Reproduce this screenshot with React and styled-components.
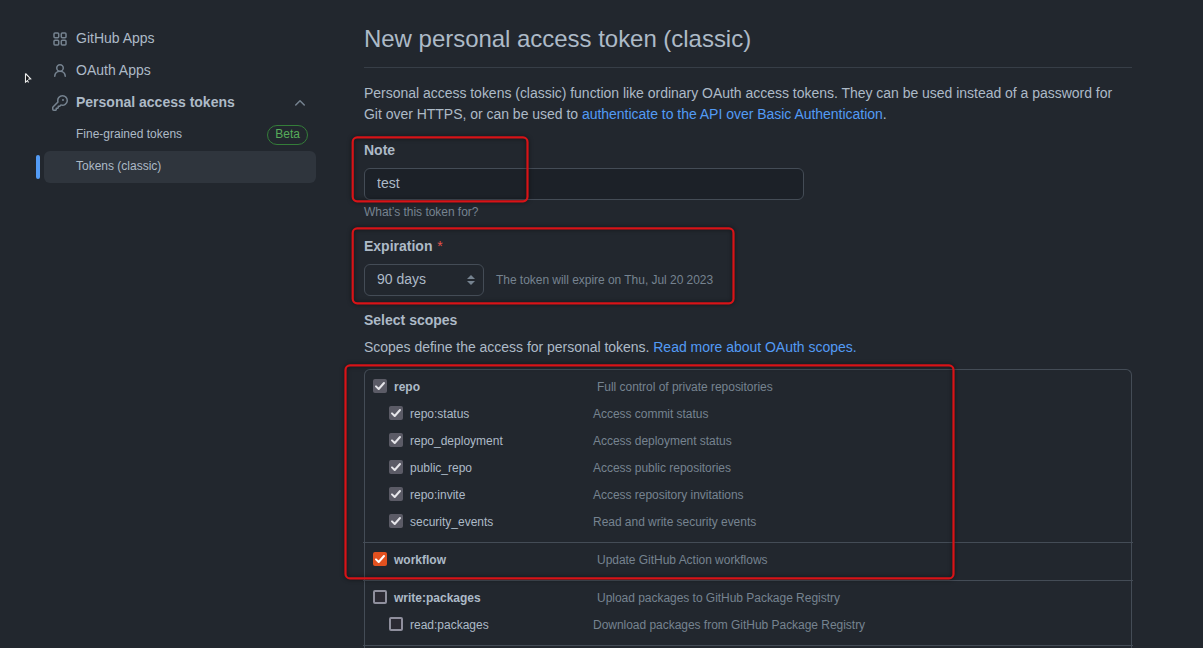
import React from "react";
import styled, { createGlobalStyle, css } from "styled-components";

const Global = createGlobalStyle`
  * { box-sizing: border-box; }
  html, body { margin: 0; height: 100%; overflow: hidden; background: #22272e; }
  body { font: 14px/21px "Liberation Sans", Arial, sans-serif; color: #adbac7; }
`;

const Page = styled.div`
  position: relative;
  display: flex;
  align-items: flex-start;
  gap: 48px;
  width: 1203px;
  height: 648px;
  padding-left: 44px;
  overflow: hidden;
  background: #22272e;
`;

const Sidebar = styled.nav`
  display: flex;
  flex-direction: column;
  width: 272px;
  padding-top: 22px;
`;

const NavItem = styled.a`
  position: relative;
  display: flex;
  align-items: center;
  gap: 8px;
  height: 32px;
  padding: 0 8px;
  font-weight: ${(p) => (p.$bold ? 700 : 400)};
`;

const SubItem = styled(NavItem)`
  height: ${(p) => (p.$active ? "32px" : "33px")};
  padding-left: 32px;
  padding-bottom: 2px;
  font-size: 12px;
  line-height: 18px;
  border-radius: 6px;
  ${(p) =>
    p.$active &&
    css`
      background: #2f353d;
      &::before {
        content: "";
        position: absolute;
        left: -8px;
        top: 4px;
        width: 4px;
        height: 24px;
        border-radius: 6px;
        background: #539bf5;
      }
    `}
`;

const NavLabel = styled.span`
  flex: 1;
`;

const Icon = styled.svg`
  flex: none;
  width: 16px;
  height: 16px;
  margin-top: 2px;
  fill: #768390;
`;

const BetaLabel = styled.span`
  height: 20px;
  margin-top: 2px;
  padding: 0 7px;
  border: 1px solid #347d39;
  border-radius: 10px;
  color: #57ab5a;
  line-height: 17px;
`;

const Main = styled.main`
  display: flex;
  flex-direction: column;
  width: 768px;
  padding-top: 20px;
`;

const Title = styled.h1`
  height: 48px;
  margin: 0 0 15px;
  border-bottom: 1px solid #373e47;
  font-size: 24px;
  line-height: 37px;
  font-weight: 400;
  letter-spacing: -0.03px;
`;

const Text = styled.p`
  margin: 0;
  letter-spacing: -0.022px;
`;

const ScopesIntro = styled(Text)`
  margin-top: 6px;
`;

const Link = styled.a`
  color: #539bf5;
`;

const FieldLabel = styled.label`
  margin-top: ${(p) => p.$top}px;
  font-weight: 700;
`;

const Required = styled.span`
  margin-left: 1px;
  color: #e5534b;
  font-weight: 400;
`;

const NoteInput = styled.input`
  width: 440px;
  height: 32px;
  margin: 7px 0 3px;
  padding: 3px 12px 5px;
  border: 1px solid #444c56;
  border-radius: 6px;
  outline: 0;
  background: #1c2128;
  color: #adbac7;
  font: inherit;
`;

const Hint = styled.span`
  color: #768390;
  font-size: 12px;
  line-height: 18px;
  letter-spacing: -0.035px;
`;

const ExpirationRow = styled.div`
  display: flex;
  align-items: center;
  gap: 12px;
  margin-top: 7px;
`;

const SelectBox = styled.div`
  display: flex;
  align-items: center;
  justify-content: space-between;
  width: 120px;
  height: 32px;
  padding: 0 8px 2px 12px;
  border: 1px solid #444c56;
  border-radius: 6px;
`;

const SelectArrows = styled.svg`
  width: 8px;
  height: 10px;
  margin-top: 2px;
  fill: #768390;
`;

const ScopeList = styled.div`
  height: 290px;
  margin-top: 11px;
  border: 1px solid #444c56;
  border-bottom: 0;
  border-radius: 6px 6px 0 0;
`;

const ScopeGroup = styled.div`
  margin: 0 -2px;
  padding: 3px 10px 7px;
  border-bottom: 1px solid #444c56;
`;

const ScopeRow = styled.div`
  display: flex;
  align-items: center;
  height: 27px;
  padding-left: ${(p) => (p.$child ? 16 : 0)}px;
  font-size: 12px;
  line-height: 18px;
`;

const Check = styled.span`
  flex: none;
  display: flex;
  width: 14px;
  height: 14px;
  margin: 0 7px 1px 0;
  border-radius: 2px;
  border: ${(p) => (p.$tone === "empty" ? "2px solid #8f8f9d" : "0")};
  background: ${(p) => ({ gray: "#5b5b66", orange: "#e2511f", empty: "#2b2a33" })[p.$tone]};
`;

const ScopeName = styled.span`
  width: ${(p) => (p.$child ? 183 : 203)}px;
  font-weight: ${(p) => (p.$child ? 400 : 700)};
`;

const ScopeInfo = styled.span`
  color: #768390;
  letter-spacing: -0.03px;
`;

const Highlight = styled.svg`
  position: absolute;
  left: 0;
  top: 0;
  width: 1203px;
  height: 648px;
  fill: none;
  pointer-events: none;
  filter: drop-shadow(0 0 2px rgba(0, 0, 0, 0.6));
`;

const Pointer = styled.svg`
  position: absolute;
  left: 24px;
  top: 72px;
  width: 9px;
  height: 12px;
`;

const ICONS = {
  apps: "M1.5 3.25c0-.966.784-1.75 1.75-1.75h2.5c.966 0 1.75.784 1.75 1.75v2.5A1.75 1.75 0 0 1 5.75 7.5h-2.5A1.75 1.75 0 0 1 1.5 5.75Zm7 0c0-.966.784-1.75 1.75-1.75h2.5c.966 0 1.75.784 1.75 1.75v2.5a1.75 1.75 0 0 1-1.75 1.75h-2.5A1.75 1.75 0 0 1 8.5 5.75Zm-7 7c0-.966.784-1.75 1.75-1.75h2.5c.966 0 1.75.784 1.75 1.75v2.5a1.75 1.75 0 0 1-1.75 1.75h-2.5a1.75 1.75 0 0 1-1.75-1.75Zm7 0c0-.966.784-1.75 1.75-1.75h2.5c.966 0 1.75.784 1.75 1.75v2.5a1.75 1.75 0 0 1-1.75 1.75h-2.5a1.75 1.75 0 0 1-1.75-1.75ZM3 3v3h3V3Zm7 0v3h3V3ZM3 10v3h3v-3Zm7 0v3h3v-3Z",
  person: "M10.561 8.073a6.005 6.005 0 0 1 3.432 5.142.75.75 0 1 1-1.498.07 4.5 4.5 0 0 0-8.99 0 .75.75 0 0 1-1.498-.07 6.004 6.004 0 0 1 3.431-5.142 3.999 3.999 0 1 1 5.123 0ZM10.5 5a2.5 2.5 0 1 0-5 0 2.5 2.5 0 0 0 5 0Z",
  key: "M10.5 0a5.499 5.499 0 1 1-1.288 10.848l-.932.932a.749.749 0 0 1-.53.22H7v.75a.749.749 0 0 1-.22.53l-.5.5a.749.749 0 0 1-.53.22H5v.75a.749.749 0 0 1-.22.53l-.5.5a.749.749 0 0 1-.53.22h-2A1.75 1.75 0 0 1 0 14.25v-2c0-.199.079-.389.22-.53l4.932-4.932A5.5 5.5 0 0 1 10.5 0Zm-4 5.5c-.001.431.069.86.205 1.269a.75.75 0 0 1-.181.768L1.5 12.56v1.69c0 .138.112.25.25.25h1.69l.06-.06v-1.19a.75.75 0 0 1 .75-.75h1.19l.06-.06v-1.19a.75.75 0 0 1 .75-.75h1.19l1.023-1.025a.75.75 0 0 1 .768-.18A4 4 0 1 0 6.5 5.5ZM11 6a1 1 0 1 1 0-2 1 1 0 0 1 0 2Z",
  chevron: "M3.22 10.53a.749.749 0 0 1 0-1.06l4.25-4.25a.749.749 0 0 1 1.06 0l4.25 4.25a.749.749 0 1 1-1.06 1.06L8 6.811 4.28 10.53a.749.749 0 0 1-1.06 0Z",
};

// The grid icon's outer squares are drawn as strokes so the four tiles stay even.
const Glyph = ({ name }) => (
  <Icon viewBox="0 0 16 16" fillRule="evenodd">
    {name === "apps" ? (
      <g fill="none" stroke="#768390" strokeWidth="1.5">
        {[[2, 2], [9.3, 2], [2, 9.3], [9.3, 9.3]].map(([x, y]) => (
          <rect key={`${x}-${y}`} x={x} y={y} width="4.7" height="4.7" rx="1" />
        ))}
      </g>
    ) : (
      <path d={ICONS[name]} />
    )}
  </Icon>
);

const SCOPES = [
  [
    ["repo", "Full control of private repositories", "gray"],
    ["repo:status", "Access commit status", "gray"],
    ["repo_deployment", "Access deployment status", "gray"],
    ["public_repo", "Access public repositories", "gray"],
    ["repo:invite", "Access repository invitations", "gray"],
    ["security_events", "Read and write security events", "gray"],
  ],
  [["workflow", "Update GitHub Action workflows", "orange"]],
  [
    ["write:packages", "Upload packages to GitHub Package Registry", "empty"],
    ["read:packages", "Download packages from GitHub Package Registry", "empty"],
  ],
];

function Scope({ name, info, tone, child }) {
  return (
    <ScopeRow $child={child}>
      <Check $tone={tone}>
        {tone !== "empty" && (
          <svg width="14" height="14" viewBox="0 0 14 14" fill="none">
            <path d="M3 7.4 5.7 10 11 4" stroke={tone === "orange" ? "#fff" : "#e6e6ea"} strokeWidth="2" strokeLinecap="round" strokeLinejoin="round" />
          </svg>
        )}
      </Check>
      <ScopeName $child={child}>{name}</ScopeName>
      <ScopeInfo>{info}</ScopeInfo>
    </ScopeRow>
  );
}

export default function App() {
  return (
    <Page>
      <Global />
      <Sidebar>
        <NavItem><Glyph name="apps" /><NavLabel>GitHub Apps</NavLabel></NavItem>
        <NavItem><Glyph name="person" /><NavLabel>OAuth Apps</NavLabel></NavItem>
        <NavItem $bold><Glyph name="key" /><NavLabel>Personal access tokens</NavLabel><Glyph name="chevron" /></NavItem>
        <SubItem><NavLabel>Fine-grained tokens</NavLabel><BetaLabel>Beta</BetaLabel></SubItem>
        <SubItem $active><NavLabel>Tokens (classic)</NavLabel></SubItem>
      </Sidebar>
      <Main>
        <Title>New personal access token (classic)</Title>
        <Text>
          Personal access tokens (classic) function like ordinary OAuth access tokens. They can be used instead of a password for Git over HTTPS, or can be used to <Link>authenticate to the API over Basic Authentication</Link>.
        </Text>
        <FieldLabel $top={15}>Note</FieldLabel>
        <NoteInput defaultValue="test" />
        <Hint>What’s this token for?</Hint>
        <FieldLabel $top={15}>Expiration <Required>*</Required></FieldLabel>
        <ExpirationRow>
          <SelectBox>
            90 days
            <SelectArrows viewBox="0 0 8 10"><path d="M0 4 4 0l4 4ZM0 6l4 4 4-4Z" /></SelectArrows>
          </SelectBox>
          <Hint>The token will expire on Thu, Jul 20 2023</Hint>
        </ExpirationRow>
        <FieldLabel as="div" $top={14}>Select scopes</FieldLabel>
        <ScopesIntro>
          Scopes define the access for personal tokens. <Link>Read more about OAuth scopes.</Link>
        </ScopesIntro>
        <ScopeList>
          {SCOPES.map((group) => (
            <ScopeGroup key={group[0][0]}>
              {group.map(([name, info, tone], i) => (
                <Scope key={name} name={name} info={info} tone={tone} child={i > 0} />
              ))}
            </ScopeGroup>
          ))}
        </ScopeList>
      </Main>
      <Highlight viewBox="0 0 1203 648">
        <g stroke="#d81317" strokeWidth="2.2">
          <rect x="352.7" y="137.4" width="174.8" height="63.9" rx="4.5" />
          <rect x="352.7" y="228.4" width="380.8" height="74.9" rx="4.5" />
          <rect x="345.5" y="365.4" width="608" height="213" rx="4.5" />
        </g>
      </Highlight>
      <Pointer viewBox="0 0 9 12"><path d="M1.5 1.5v8.6l2-1.6 1 2M1.5 1.5l5.2 5.4-2.6.4" fill="#111" stroke="#eee" strokeWidth="1.1" /></Pointer>
    </Page>
  );
}
